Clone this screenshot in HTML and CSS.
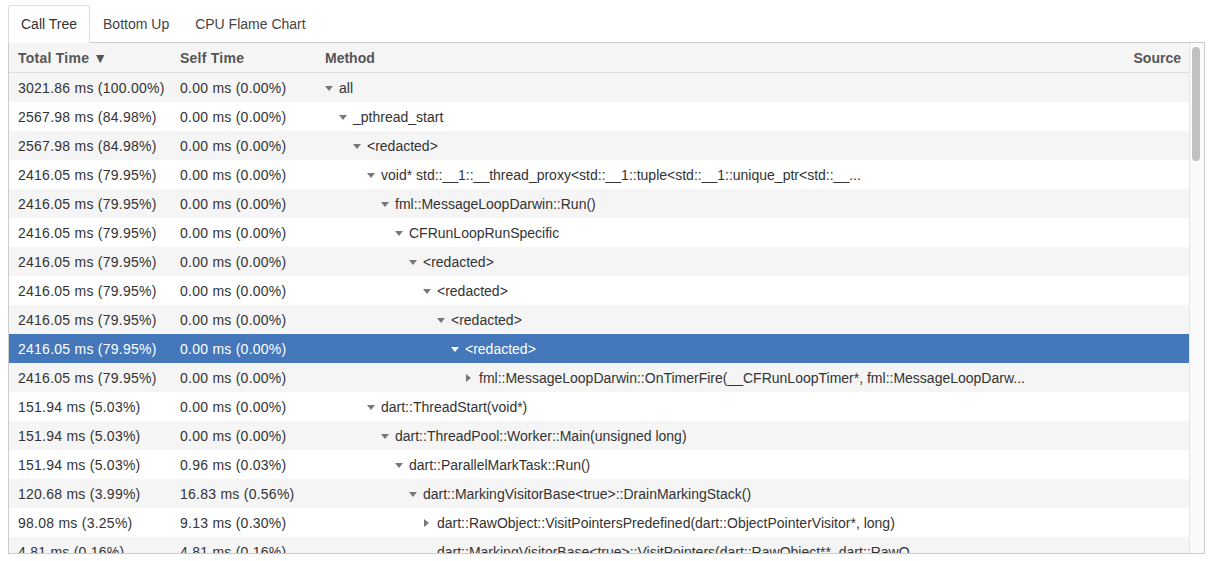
FILE: index.html
```html
<!DOCTYPE html>
<html>
<head>
<meta charset="utf-8">
<link rel="stylesheet" href="styles.css">
</head>
<body>
<div class="tabs">
  <div class="tab active">Call Tree</div>
  <div class="tab">Bottom Up</div>
  <div class="tab">CPU Flame Chart</div>
</div>
<div class="panel">
  <div class="table">
    <div class="row head">
      <div class="c1">Total Time ▼</div>
      <div class="c2">Self Time</div>
      <div class="c3">Method</div>
      <div class="c4">Source</div>
    </div>
    <div class="row odd"><div class="c1">3021.86 ms (100.00%)</div><div class="c2">0.00 ms (0.00%)</div><div class="c3"><span class="ind" style="width:0px"></span><span class="tri down"></span>all</div></div>
    <div class="row"><div class="c1">2567.98 ms (84.98%)</div><div class="c2">0.00 ms (0.00%)</div><div class="c3"><span class="ind" style="width:14px"></span><span class="tri down"></span>_pthread_start</div></div>
    <div class="row odd"><div class="c1">2567.98 ms (84.98%)</div><div class="c2">0.00 ms (0.00%)</div><div class="c3"><span class="ind" style="width:28px"></span><span class="tri down"></span>&lt;redacted&gt;</div></div>
    <div class="row"><div class="c1">2416.05 ms (79.95%)</div><div class="c2">0.00 ms (0.00%)</div><div class="c3"><span class="ind" style="width:42px"></span><span class="tri down"></span>void* std::__1::__thread_proxy&lt;std::__1::tuple&lt;std::__1::unique_ptr&lt;std::__...</div></div>
    <div class="row odd"><div class="c1">2416.05 ms (79.95%)</div><div class="c2">0.00 ms (0.00%)</div><div class="c3"><span class="ind" style="width:56px"></span><span class="tri down"></span>fml::MessageLoopDarwin::Run()</div></div>
    <div class="row"><div class="c1">2416.05 ms (79.95%)</div><div class="c2">0.00 ms (0.00%)</div><div class="c3"><span class="ind" style="width:70px"></span><span class="tri down"></span>CFRunLoopRunSpecific</div></div>
    <div class="row odd"><div class="c1">2416.05 ms (79.95%)</div><div class="c2">0.00 ms (0.00%)</div><div class="c3"><span class="ind" style="width:84px"></span><span class="tri down"></span>&lt;redacted&gt;</div></div>
    <div class="row"><div class="c1">2416.05 ms (79.95%)</div><div class="c2">0.00 ms (0.00%)</div><div class="c3"><span class="ind" style="width:98px"></span><span class="tri down"></span>&lt;redacted&gt;</div></div>
    <div class="row odd"><div class="c1">2416.05 ms (79.95%)</div><div class="c2">0.00 ms (0.00%)</div><div class="c3"><span class="ind" style="width:112px"></span><span class="tri down"></span>&lt;redacted&gt;</div></div>
    <div class="row selected"><div class="c1">2416.05 ms (79.95%)</div><div class="c2">0.00 ms (0.00%)</div><div class="c3"><span class="ind" style="width:126px"></span><span class="tri down"></span>&lt;redacted&gt;</div></div>
    <div class="row odd"><div class="c1">2416.05 ms (79.95%)</div><div class="c2">0.00 ms (0.00%)</div><div class="c3"><span class="ind" style="width:140px"></span><span class="tri right"></span>fml::MessageLoopDarwin::OnTimerFire(__CFRunLoopTimer*, fml::MessageLoopDarw...</div></div>
    <div class="row"><div class="c1">151.94 ms (5.03%)</div><div class="c2">0.00 ms (0.00%)</div><div class="c3"><span class="ind" style="width:42px"></span><span class="tri down"></span>dart::ThreadStart(void*)</div></div>
    <div class="row odd"><div class="c1">151.94 ms (5.03%)</div><div class="c2">0.00 ms (0.00%)</div><div class="c3"><span class="ind" style="width:56px"></span><span class="tri down"></span>dart::ThreadPool::Worker::Main(unsigned long)</div></div>
    <div class="row"><div class="c1">151.94 ms (5.03%)</div><div class="c2">0.96 ms (0.03%)</div><div class="c3"><span class="ind" style="width:70px"></span><span class="tri down"></span>dart::ParallelMarkTask::Run()</div></div>
    <div class="row odd"><div class="c1">120.68 ms (3.99%)</div><div class="c2">16.83 ms (0.56%)</div><div class="c3"><span class="ind" style="width:84px"></span><span class="tri down"></span>dart::MarkingVisitorBase&lt;true&gt;::DrainMarkingStack()</div></div>
    <div class="row"><div class="c1">98.08 ms (3.25%)</div><div class="c2">9.13 ms (0.30%)</div><div class="c3"><span class="ind" style="width:98px"></span><span class="tri right"></span>dart::RawObject::VisitPointersPredefined(dart::ObjectPointerVisitor*, long)</div></div>
    <div class="row odd"><div class="c1">4.81 ms (0.16%)</div><div class="c2">4.81 ms (0.16%)</div><div class="c3"><span class="ind" style="width:112px"></span>dart::MarkingVisitorBase&lt;true&gt;::VisitPointers(dart::RawObject**, dart::RawO...</div></div>
  </div>
  <div class="scrollbar"><div class="thumb"></div></div>
</div>
</body>
</html>
```

FILE: styles.css
```css
* { box-sizing: border-box; }
html, body { margin: 0; background: #fff; }
body {
  padding: 5px 8px 0 8px;
  font-family: "Liberation Sans", Arial, sans-serif;
  font-size: 14px;
  color: #333;
}
.tabs {
  display: flex;
  height: 37px;
  position: relative;
  z-index: 1;
}
.tab {
  padding: 0 12px 0 12px;
  line-height: 37px;
  color: #444;
  border: 1px solid transparent;
  border-bottom: none;
  border-radius: 3px 3px 0 0;
}
.tab.active {
  border-color: #ddd;
  background: #fff;
  color: #333;
  height: 38px;
}
.panel {
  display: flex;
  border: 1px solid #ccc;
  height: 512px;
  overflow: hidden;
  width: 1197px;
}
.table {
  flex: 1;
  overflow: hidden;
}
.row {
  display: flex;
  height: 29px;
  align-items: center;
  white-space: nowrap;
  background: #fff;
}
.row.odd { background: #f5f5f5; }
.row.head {
  height: 30px;
  background: #f5f5f5;
  border-bottom: 1px solid #e0e0e0;
  font-weight: bold;
  color: #555;
}
.row.selected { background: #4577bb; color: #fff; }
.c1 { width: 162px; padding-left: 9px; letter-spacing: 0.25px; }
.c2 { width: 145px; padding-left: 9px; letter-spacing: 0.25px; }
.c3 { flex: 1; padding-left: 9px; display: flex; align-items: center; overflow: hidden; }
.c4 { width: 100px; text-align: right; padding-right: 8px; }
.ind { display: inline-block; flex: none; }
.tri {
  display: inline-block;
  flex: none;
  width: 14px;
  height: 10px;
  position: relative;
}
.tri.down::before {
  content: "";
  position: absolute;
  left: 0;
  top: 3px;
  border-left: 4px solid transparent;
  border-right: 4px solid transparent;
  border-top: 5px solid #777;
}
.selected .tri.down::before { border-top-color: #fff; }
.tri.right::before {
  content: "";
  position: absolute;
  left: 1px;
  top: 1px;
  border-top: 4px solid transparent;
  border-bottom: 4px solid transparent;
  border-left: 5px solid #777;
}
.scrollbar {
  width: 15px;
  flex: none;
  background: #fafafa;
  border-left: 1px solid #e6e6e6;
  padding: 4px 3px 0 2px;
}
.thumb {
  width: 8px;
  height: 114px;
  border-radius: 4px;
  background: #c1c1c1;
}
```
